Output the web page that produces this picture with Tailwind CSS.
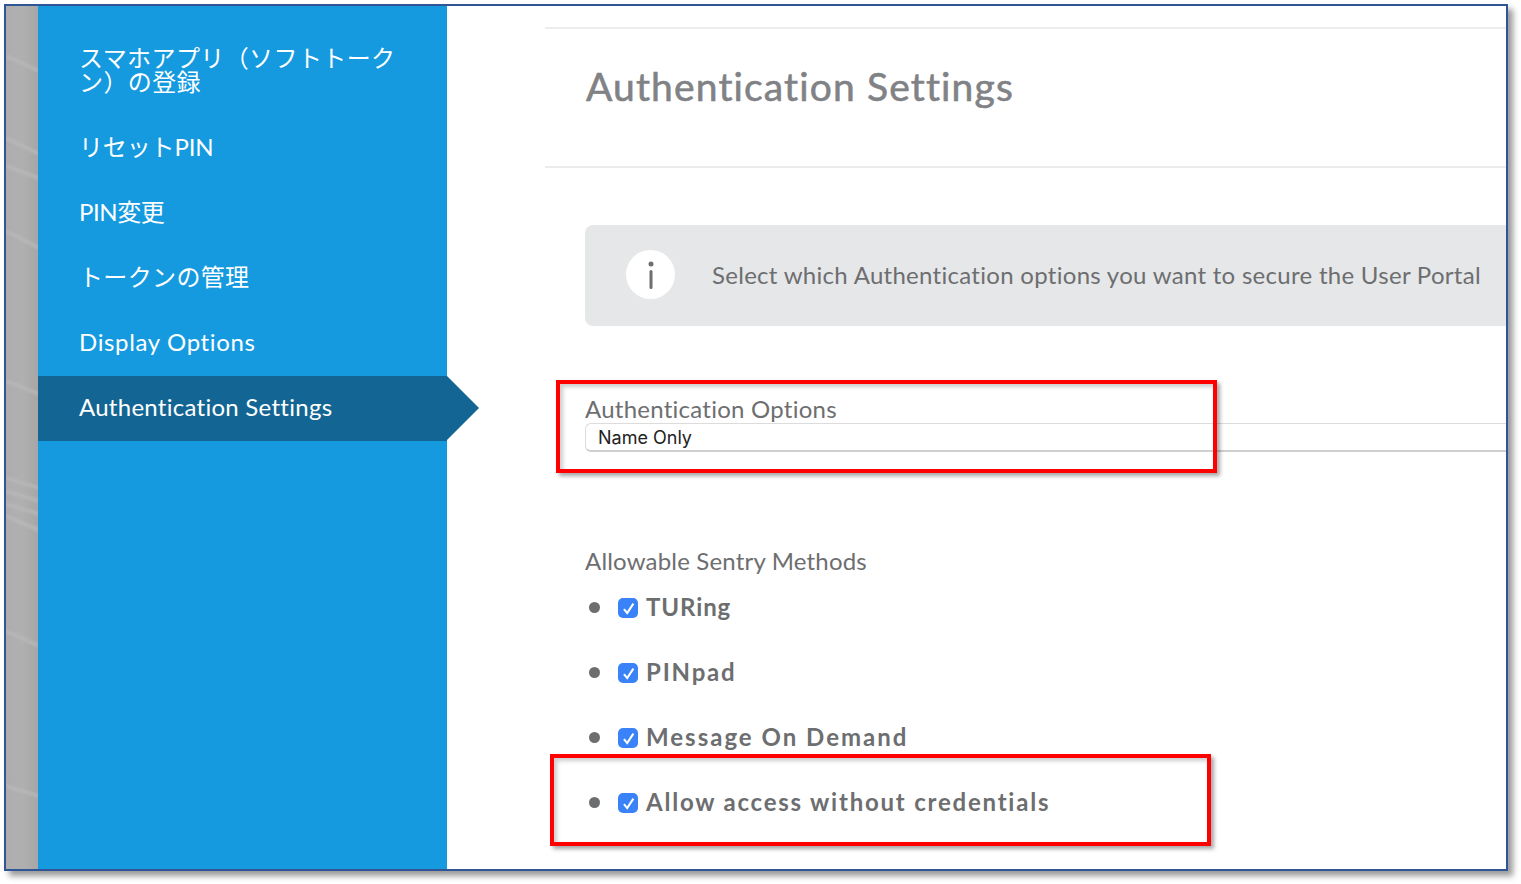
<!DOCTYPE html>
<html lang="ja">
<head>
    <meta charset="UTF-8">
    <title>Authentication Settings</title>
    <script src="https://cdn.jsdelivr.net/npm/@tailwindcss/browser@4"></script>
</head>
<body class="bg-white h-[884px] w-[1521px] overflow-hidden font-['Lato','Noto_Sans_CJK_JP',sans-serif]">
    <div class="relative ml-[4px] mt-[4px] w-[1504px] h-[867px] border-2 border-[#2f5597] shadow-[5px_5px_6px_rgba(0,0,0,0.4)] bg-white flex overflow-hidden">
        <!-- Blurred background strip -->
        <div class="w-[32px] shrink-0 bg-gradient-to-r from-[#adadad] via-[#b0b0b0] to-[#a6a6a6] overflow-hidden">
            <svg class="blur-[1.5px]" width="33" height="864" fill="none" stroke="#b9b9b9" stroke-width="3">
                <path d="M0 50 L33 65"/>
                <path d="M0 132 L33 148"/>
                <path d="M0 160 L33 172"/>
                <path d="M0 225 L33 242"/>
                <path d="M0 375 L33 388"/>
                <path d="M0 472 L33 482"/>
                <path d="M0 485 L33 495"/>
                <path d="M0 498 L33 508"/>
                <path d="M0 510 L33 524"/>
                <path d="M0 625 L33 640"/>
                <path d="M0 780 L33 790"/>
            </svg>
        </div>

        <!-- Sidebar -->
        <nav class="relative w-[409px] shrink-0 bg-[#159ae0] text-white text-[24px] pt-[19px]">
            <a class="flex items-center h-[89px] pl-[41px] pr-[50px] leading-[24px] tracking-[0.4px]">スマホアプリ（ソフトトークン）の登録</a>
            <a class="flex items-center h-[65px] pl-[41px] tracking-[-0.15px]">リセットPIN</a>
            <a class="flex items-center h-[65px] pl-[41px] tracking-[-0.4px]">PIN変更</a>
            <a class="flex items-center h-[65px] pl-[41px] tracking-[0.35px]">トークンの管理</a>
            <a class="flex items-center h-[66px] pl-[41px] tracking-[0.65px]">Display Options</a>
            <a class="relative flex items-center h-[65px] pl-[41px] bg-[#136693] tracking-[0.27px] top-[1px] pb-[4px]">
                Authentication Settings
                <span class="absolute left-full top-0 border-y-[32.5px] border-y-transparent border-l-[32px] border-l-[#136693]"></span>
            </a>
        </nav>

        <!-- Main content -->
        <main class="flex-1 min-w-0 pl-[98px] pt-[21px] text-[#6d6e70]">
            <div class="border-t-2 border-b-2 border-[#ececec] h-[141px] flex items-center pl-[41px] pb-[22px]">
                <h1 class="text-[39px] text-[#808285] tracking-[1.15px] [-webkit-text-stroke:0.6px_#808285]">Authentication Settings</h1>
            </div>

            <div class="ml-[40px] mt-[57px] h-[101px] bg-[#e6e7e8] rounded-l-lg flex items-center pl-[41px] pb-[2px]">
                <div class="w-[49px] h-[49px] rounded-full bg-white shrink-0 flex items-center justify-center">
                    <svg width="6" height="28" viewBox="0 0 6 28" fill="#6d6e70">
                        <circle cx="3" cy="3" r="2.5"/>
                        <rect x="1.5" y="9" width="3" height="19" rx="1.5"/>
                    </svg>
                </div>
                <p class="ml-[37px] text-[24px] whitespace-nowrap tracking-[0.29px]">Select which Authentication options you want to secure the User Portal</p>
            </div>

            <div class="ml-[40px] mt-[67px]">
                <label class="block text-[24px] leading-[31px] tracking-[0.25px]">Authentication Options</label>
                <div class="h-[29px] -mt-[1px] bg-white border-t border-l border-[#dcdcdc] border-b-2 border-b-[#cfcfcf] rounded-l-md flex items-center pl-[12px] text-[18px] text-[#222] font-['Inter',sans-serif]">Name Only</div>
            </div>

            <div class="ml-[40px] mt-[93px]">
                <p class="text-[24px] leading-[31px] tracking-[0.18px]">Allowable Sentry Methods</p>
                <ul class="-mt-[2px] font-bold text-[24px]">
                    <li class="flex items-center h-[65px]">
                        <span class="w-[11px] h-[11px] rounded-full bg-[#6d6e70] ml-[4px] mt-[2px]"></span>
                        <span class="ml-[18px] mt-[3px] w-[20px] h-[20px] rounded-[5px] bg-[#3a82f7] flex items-center justify-center">
                            <svg width="13" height="13" viewBox="0 0 12 12" fill="none" stroke="#fff" stroke-width="1.9"><path d="M1.8 6.5 L4.8 10.2 L10.5 1.5"/></svg>
                        </span>
                        <span class="ml-[8px] tracking-[0.9px]">TURing</span>
                    </li>
                    <li class="flex items-center h-[65px]">
                        <span class="w-[11px] h-[11px] rounded-full bg-[#6d6e70] ml-[4px] mt-[2px]"></span>
                        <span class="ml-[18px] mt-[3px] w-[20px] h-[20px] rounded-[5px] bg-[#3a82f7] flex items-center justify-center">
                            <svg width="13" height="13" viewBox="0 0 12 12" fill="none" stroke="#fff" stroke-width="1.9"><path d="M1.8 6.5 L4.8 10.2 L10.5 1.5"/></svg>
                        </span>
                        <span class="ml-[8px] tracking-[1.8px]">PINpad</span>
                    </li>
                    <li class="flex items-center h-[65px]">
                        <span class="w-[11px] h-[11px] rounded-full bg-[#6d6e70] ml-[4px] mt-[2px]"></span>
                        <span class="ml-[18px] mt-[3px] w-[20px] h-[20px] rounded-[5px] bg-[#3a82f7] flex items-center justify-center">
                            <svg width="13" height="13" viewBox="0 0 12 12" fill="none" stroke="#fff" stroke-width="1.9"><path d="M1.8 6.5 L4.8 10.2 L10.5 1.5"/></svg>
                        </span>
                        <span class="ml-[8px] tracking-[2px]">Message On Demand</span>
                    </li>
                    <li class="flex items-center h-[65px]">
                        <span class="w-[11px] h-[11px] rounded-full bg-[#6d6e70] ml-[4px] mt-[2px]"></span>
                        <span class="ml-[18px] mt-[3px] w-[20px] h-[20px] rounded-[5px] bg-[#3a82f7] flex items-center justify-center">
                            <svg width="13" height="13" viewBox="0 0 12 12" fill="none" stroke="#fff" stroke-width="1.9"><path d="M1.8 6.5 L4.8 10.2 L10.5 1.5"/></svg>
                        </span>
                        <span class="ml-[8px] tracking-[1.78px]">Allow access without credentials</span>
                    </li>
                </ul>
            </div>
        </main>

        <!-- Red annotation boxes -->
        <div class="absolute left-[550px] top-[374px] w-[661px] h-[93px] border-4 border-[#ff0000] shadow-[3px_3px_4px_rgba(0,0,0,0.35),inset_3px_3px_4px_rgba(0,0,0,0.2)]"></div>
        <div class="absolute left-[544px] top-[748px] w-[661px] h-[92px] border-4 border-[#ff0000] shadow-[3px_3px_4px_rgba(0,0,0,0.35),inset_3px_3px_4px_rgba(0,0,0,0.2)]"></div>
    </div>
</body>
</html>
